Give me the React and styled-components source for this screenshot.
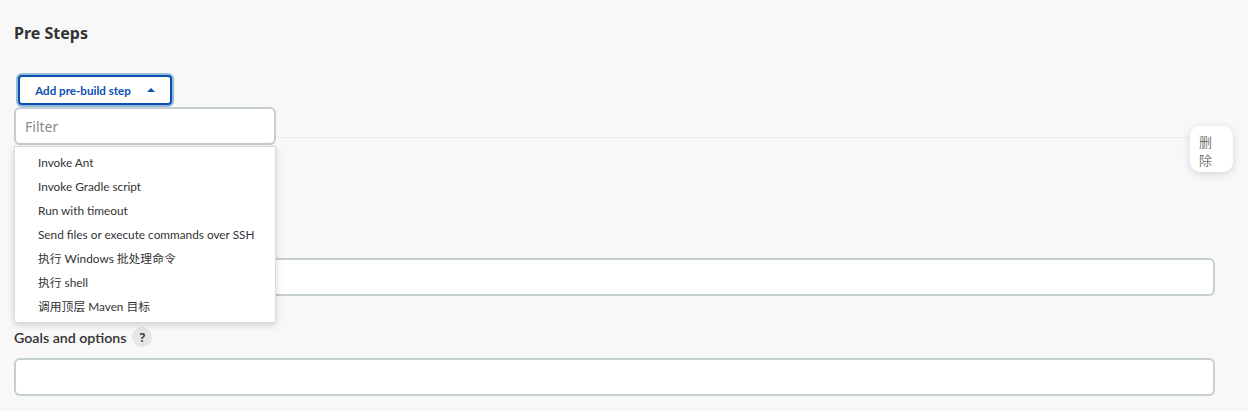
import React from 'react'
import styled, { createGlobalStyle } from 'styled-components'

const Global = createGlobalStyle`
  body {
    margin: 0;
    background: #f8f8f8;
    font-family: "Noto Sans", "Noto Sans CJK SC", sans-serif;
    color: #333;
  }
`

const Page = styled.div`
  padding: 20px 33px 14px 14px;
`

const Heading = styled.h2`
  margin: 0;
  font-size: 16px;
  font-weight: 700;
  line-height: 26px;
  color: #333;
`

const AddArea = styled.div`
  position: relative;
  margin-top: 27px;
  padding-left: 2px;
  height: 34px;
`

const Ring = styled.div`
  display: inline-block;
  padding: 2px;
  border-radius: 6px;
  background: #95bad8;
`

const AddButton = styled.button`
  display: flex;
  align-items: center;
  gap: 16px;
  height: 30px;
  width: 154px;
  justify-content: center;
  padding: 0;
  border: 2px solid #0b4fb1;
  border-radius: 4px;
  background: #fff;
  color: #0b4fb1;
  font-family: Lato, "Noto Sans", sans-serif;
  font-size: 11.6px;
  font-weight: 700;
  cursor: pointer;
`

const Caret = styled.span`
  width: 0;
  height: 0;
  border-left: 4px solid transparent;
  border-right: 4px solid transparent;
  border-bottom: 4px solid #0b4fb1;
  margin-top: -1px;
`

const Dropdown = styled.div`
  position: absolute;
  left: 0;
  top: 34px;
  width: 262px;
  z-index: 5;
`

const Filter = styled.input`
  box-sizing: border-box;
  display: block;
  width: 262px;
  height: 38px;
  padding: 0 9px;
  border: 2px solid #c5ced2;
  border-radius: 6px;
  background: #fff;
  font-family: inherit;
  font-size: 14px;
  outline: none;
  &::placeholder { color: #8a8a8a; }
`

const Menu = styled.ul`
  list-style: none;
  margin: 1px 0 0;
  padding: 4px 0 3px;
  background: #fff;
  border: 1px solid #d4dadd;
  box-shadow: 0 2px 7px rgba(0, 0, 0, 0.16);
`

const Item = styled.li`
  height: 24px;
  line-height: 24px;
  padding-left: 23px;
  font-family: Lato, "Noto Sans CJK SC", sans-serif;
  font-size: 11.8px;
  color: #333;
  white-space: nowrap;
`

const Section = styled.div`
  position: relative;
  margin-top: 30px;
  border-top: 1px solid #ebebeb;
  padding-top: 97px;
`

const DeleteButton = styled.button`
  position: absolute;
  top: -12px;
  right: -18px;
  width: 43px;
  height: 46px;
  padding: 3px 10px 0 9px;
  border: none;
  border-radius: 10px;
  background: #fff;
  box-shadow: 0 2px 8px rgba(0, 0, 0, 0.14);
  font-family: "Noto Sans CJK SC", sans-serif;
  font-size: 13px;
  font-weight: 300;
  line-height: 18px;
  color: #333;
  text-align: left;
  word-break: break-all;
`

const Label = styled.div`
  display: flex;
  align-items: center;
  gap: 6px;
  height: 24px;
  margin-top: 29px;
  font-family: Lato, "Noto Sans", sans-serif;
  font-size: 14.2px;
  font-weight: 600;
  color: #333;
`

const Help = styled.span`
  display: inline-flex;
  align-items: center;
  justify-content: center;
  width: 20px;
  height: 20px;
  border-radius: 50%;
  background: #e6e6e6;
  font-family: "Noto Sans", sans-serif;
  font-size: 12px;
  font-weight: 700;
  color: #444;
`

const Field = styled.input`
  box-sizing: border-box;
  display: block;
  width: 100%;
  height: 38px;
  margin-top: ${(p) => p.gap}px;
  border: 2px solid #c5ced2;
  border-radius: 6px;
  background: #fff;
  outline: none;
`

const items = [
  'Invoke Ant',
  'Invoke Gradle script',
  'Run with timeout',
  'Send files or execute commands over SSH',
  '执行 Windows 批处理命令',
  '执行 shell',
  '调用顶层 Maven 目标',
]

const App = () => {
  return (
    <Page>
      <Global />
      <Heading>Pre Steps</Heading>
      <AddArea>
        <Ring>
          <AddButton>
            Add pre-build step <Caret />
          </AddButton>
        </Ring>
        <Dropdown>
          <Filter placeholder="Filter" />
          <Menu>
            {items.map((t) => (
              <Item key={t}>{t}</Item>
            ))}
          </Menu>
        </Dropdown>
      </AddArea>
      <Section>
        <DeleteButton>删除</DeleteButton>
        <Field gap={23} />
        <Label>
          Goals and options <Help>?</Help>
        </Label>
        <Field gap={9} />
      </Section>
    </Page>
  )
}

export default App
